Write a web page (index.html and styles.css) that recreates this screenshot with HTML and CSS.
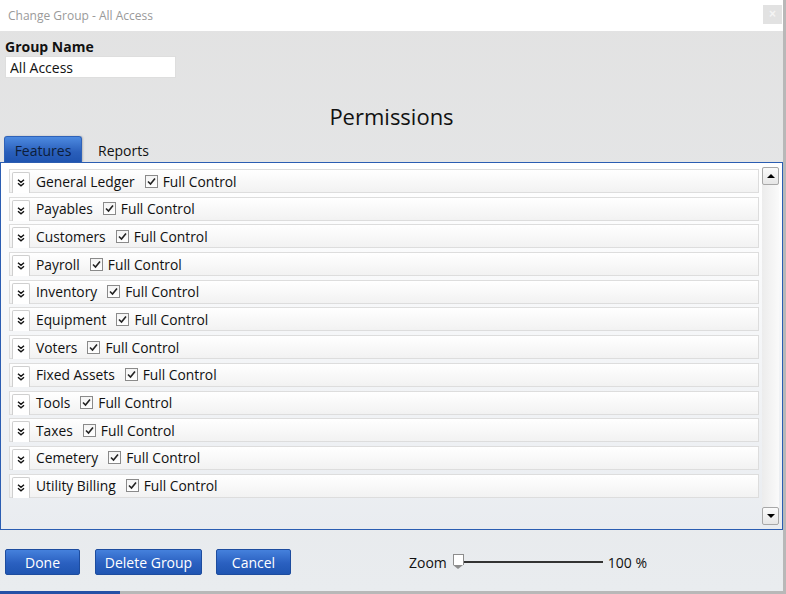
FILE: index.html
```html
<!DOCTYPE html>
<html lang="en">
<head>
    <meta charset="UTF-8">
    <title>Change Group - All Access</title>
    <link rel="stylesheet" href="styles.css">
</head>
<body>
<div class="window">
    <div class="titlebar">
        <span class="title">Change Group - All Access</span>
        <button class="close-btn">&#215;</button>
    </div>

    <div class="content">
        <label class="field-label" for="group-name">Group Name</label>
        <input class="field-input" id="group-name" type="text" value="All Access">

        <h2 class="section-title">Permissions</h2>

        <div class="tabs">
            <span class="tab active">Features</span>
            <span class="tab">Reports</span>
        </div>

        <div class="panel">
            <div class="rows" id="rows"></div>
            <div class="scrollbar">
                <div class="scroll-btn"><span class="arrow up"></span></div>
                <div class="scroll-track"></div>
                <div class="scroll-btn"><span class="arrow down"></span></div>
            </div>
        </div>

        <div class="footer">
            <button class="btn">Done</button>
            <button class="btn btn-wide">Delete Group</button>
            <button class="btn">Cancel</button>
            <div class="zoom">
                <span>Zoom</span>
                <div class="slider">
                    <span class="slider-thumb"></span>
                </div>
                <span>100 %</span>
            </div>
        </div>
    </div>
</div>
<div class="taskstrip"><span class="task-btn"></span></div>

<script>
    const features = ['General Ledger', 'Payables', 'Customers', 'Payroll', 'Inventory', 'Equipment',
        'Voters', 'Fixed Assets', 'Tools', 'Taxes', 'Cemetery', 'Utility Billing'];
    const container = document.getElementById('rows');

    features.forEach(nome => {
        container.innerHTML += `
            <div class="row">
                <span class="expander">
                    <svg width="8" height="8" viewBox="0 0 8 8"><path d="M1 0.8 L4 3.3 L7 0.8 M1 4.3 L4 6.8 L7 4.3" fill="none" stroke="#111" stroke-width="1.4"/></svg>
                </span>
                <span class="row-label">${nome}</span>
                <span class="check">
                    <svg width="11" height="11" viewBox="0 0 11 11"><path d="M2 5.5 L4.5 8 L9 2.5" fill="none" stroke="#222" stroke-width="1.6"/></svg>
                </span>
                <span class="row-label">Full Control</span>
            </div>`;
    });
</script>
</body>
</html>
```

FILE: styles.css
```css
body {
    margin: 0;
    padding: 0;
    width: 786px;
    height: 594px;
    overflow: hidden;
    font-family: 'Open Sans', 'Noto Sans', sans-serif;
    font-size: 13.5px;
    color: #111;
    background-color: #b8b8b8;
}

.window {
    width: 783px;
    height: 591px;
    background: linear-gradient(#e2e2e2, #e9ecef);
    display: flex;
    flex-direction: column;
}

.titlebar {
    height: 31px;
    background-color: #fff;
    display: flex;
    justify-content: space-between;
    align-items: center;
    padding: 0 1px 0 8px;
}

.title {
    font-size: 12px;
    color: #9a9a9a;
}

.close-btn {
    width: 19px;
    height: 19px;
    margin-top: -3px;
    border: none;
    background-color: #e2e2e2;
    color: #f4f4f4;
    font-size: 12px;
    font-weight: bold;
    padding: 0;
    line-height: 19px;
}

.content {
    display: flex;
    flex-direction: column;
}

.field-label {
    font-weight: bold;
    font-size: 14px;
    margin: 6px 0 0 5px;
    line-height: 19px;
}

.field-input {
    width: 171px;
    height: 22px;
    box-sizing: border-box;
    margin: 0 0 0 5px;
    border: 1px solid #dedede;
    padding: 0 4px;
    font-family: inherit;
    font-size: 14px;
    color: #111;
    background: #fff;
}

.section-title {
    margin: 23px 0 5px;
    text-align: center;
    font-weight: normal;
    font-size: 22px;
    line-height: 30px;
    color: #111;
}

.tabs {
    display: flex;
    padding-left: 4px;
    height: 26px;
    align-items: stretch;
}

.tab {
    padding: 0 16px 0 12px;
    display: flex;
    align-items: center;
    padding-top: 2px;
    font-size: 14px;
}

.tab.active {
    width: 78px;
    box-sizing: border-box;
    justify-content: center;
    padding: 2px 0 0;
    margin-right: 4px;
    border-radius: 3px 3px 0 0;
    border: 1px solid #2f62b8;
    border-bottom: none;
    background: linear-gradient(#4d8ae0, #2a5fbb 60%, #1f54b0);
    color: #0c1d3a;
    box-shadow: 1px 0 2px rgba(0, 0, 0, 0.2);
}

.panel {
    height: 368px;
    box-sizing: border-box;
    border: 1px solid #2b5db2;
    background: linear-gradient(#ffffff, #e9ecf0);
    display: flex;
    padding: 4px 3px 4px 8px;
}

.rows {
    flex: 1;
    display: flex;
    flex-direction: column;
    gap: 3.7px;
    padding-top: 2px;
}

.row {
    height: 24px;
    box-sizing: border-box;
    border: 1px solid #dddddd;
    background: linear-gradient(#ffffff, #f2f2f2);
    display: flex;
    align-items: center;
    padding-left: 2px;
}

.expander {
    width: 18px;
    height: 21px;
    box-sizing: border-box;
    align-self: flex-end;
    border: 1px solid #cfcfcf;
    border-bottom: none;
    border-radius: 2px 2px 0 0;
    background: #fff;
    display: flex;
    align-items: center;
    justify-content: center;
    margin-right: 6px;
    margin-bottom: -1px;
}

.row-label {
    font-size: 13.8px;
    white-space: nowrap;
}

.check {
    width: 13px;
    height: 13px;
    box-sizing: border-box;
    border: 1px solid #8a8a8a;
    background: linear-gradient(#f4f4f4, #ffffff);
    display: flex;
    align-items: center;
    justify-content: center;
    margin: 0 5px 0 10px;
}

.scrollbar {
    width: 17px;
    margin-left: 3px;
    display: flex;
    flex-direction: column;
    background: linear-gradient(to right, #ececec, #fafafa);
}

.scroll-track {
    flex: 1;
}

.scroll-btn {
    height: 18px;
    box-sizing: border-box;
    border: 1px solid #a8a8a8;
    border-radius: 2px;
    background: linear-gradient(#fbfbfb, #e6e6e6);
    display: flex;
    align-items: center;
    justify-content: center;
}

.arrow {
    width: 0;
    height: 0;
    border-left: 4px solid transparent;
    border-right: 4px solid transparent;
}

.arrow.up {
    border-bottom: 4px solid #000;
}

.arrow.down {
    border-top: 4px solid #000;
}

.footer {
    display: flex;
    align-items: center;
    padding: 19px 0 0 5px;
}

.btn {
    width: 75px;
    height: 26px;
    margin-right: 15px;
    border: 1px solid #1d4c9e;
    border-radius: 2px;
    background: linear-gradient(#4581dc, #2a60c0 55%, #1f55b2);
    color: #fff;
    font-family: inherit;
    font-size: 14px;
    padding: 0;
}

.btn-wide {
    width: 107px;
    margin-right: 14px;
}

.zoom {
    display: flex;
    align-items: center;
    margin-left: 103px;
    font-size: 14px;
}

.slider {
    position: relative;
    width: 150px;
    height: 14px;
    margin: 0 5px 0 6px;
}

.slider::before {
    content: '';
    position: absolute;
    left: 4px;
    right: 0;
    top: 6px;
    height: 2px;
    background: #333;
}

.slider-thumb {
    position: absolute;
    left: 0;
    top: -1px;
    width: 9px;
    height: 10px;
    border: 1px solid #8d8d8d;
    border-bottom: none;
    background: #fff;
}

.slider-thumb::after {
    content: '';
    position: absolute;
    left: -1px;
    top: 10px;
    border-left: 5.5px solid transparent;
    border-right: 5.5px solid transparent;
    border-top: 4px solid #8d8d8d;
}

.taskstrip {
    height: 3px;
    background: #b8b8b8;
}

.task-btn {
    display: block;
    width: 120px;
    height: 3px;
    background: #2450a6;
}
```
